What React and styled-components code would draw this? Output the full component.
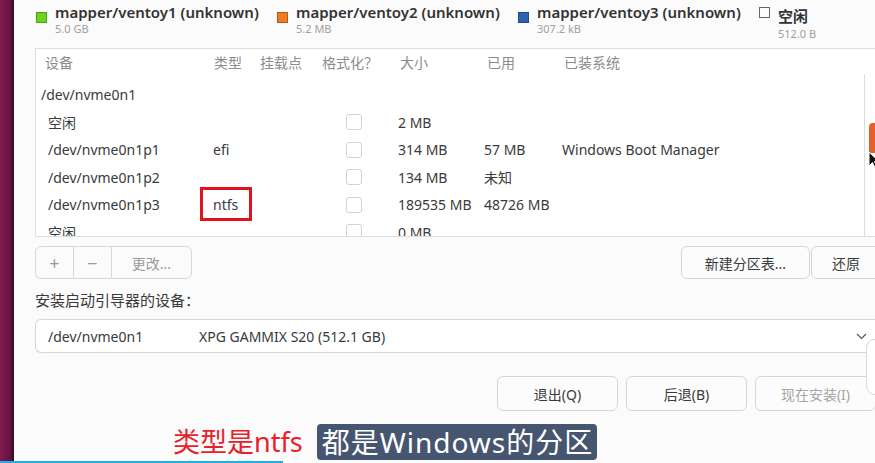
import React from 'react';
import styled, { createGlobalStyle } from 'styled-components';

const GlobalStyle = createGlobalStyle`
  html, body { margin: 0; padding: 0; background: #fbfbfb; }
  body {
    font-family: "Noto Sans", "Noto Sans CJK SC", sans-serif;
    color: #3c3c3c;
    overflow: hidden;
  }
`;

const Page = styled.div`
  position: relative;
  display: flex;
  width: 875px;
  height: 463px;
  overflow: hidden;
`;

const Desktop = styled.div`
  width: 12px;
  flex: none;
  background: linear-gradient(90deg, #7f1b50 0%, #6c1443 70%, #561036 100%);
  border-right: 2px solid #3a0f26;
`;

const Window = styled.div`
  flex: 1;
  min-width: 0;
  background: #fbfbfb;
  padding-left: 21px;
  display: flex;
  flex-direction: column;
`;

const Legend = styled.div`
  display: flex;
  height: 48px;
  margin-left: 1px;
`;

const LegendItem = styled.div`
  display: flex;
  align-items: flex-start;
  width: 241px;
  flex: none;
  padding-top: 1px;
`;

const Swatch = styled.span`
  width: 11px;
  height: 11px;
  margin-top: ${({ $empty }) => ($empty ? '6px' : '11px')};
  margin-right: 8px;
  flex: none;
  box-sizing: border-box;
  background: ${({ $color }) => $color || 'transparent'};
  border: 1px solid ${({ $color }) => ($color ? 'rgba(0,0,0,0.25)' : '#666')};
`;

const LegendText = styled.div`
  display: flex;
  flex-direction: column;
  padding-top: ${({ $empty }) => ($empty ? '4px' : '0')};
`;

const LegendName = styled.span`
  font-size: 15px;
  font-weight: 600;
  line-height: 22px;
  color: #333;
`;

const LegendSize = styled.span`
  font-size: 11px;
  line-height: 12px;
  color: #a0a0a0;
  margin-top: ${({ $empty }) => ($empty ? '1px' : '0')};
`;

const Table = styled.div`
  position: relative;
  height: 189px;
  margin-right: -12px;
  box-sizing: border-box;
  background: #fff;
  border: 1px solid #dedede;
  border-right: none;
  overflow: hidden;
`;

const cols = '177px 47px 62px 76px 86px 78px 1fr';

const HeadRow = styled.div`
  display: grid;
  grid-template-columns: ${cols};
  height: 25px;
  align-items: center;
  font-size: 14px;
  color: #8c8c8c;
  margin-bottom: 7px;
`;

const HeadCell = styled.div`
  padding-left: ${({ $pad }) => $pad ?? 2}px;
  white-space: nowrap;
`;

const Row = styled.div`
  display: grid;
  grid-template-columns: ${cols};
  height: 27.5px;
  align-items: center;
  font-size: 14px;
  color: #3a3a3a;
`;

const Cell = styled.div`
  position: relative;
  padding-left: ${({ $pad }) => $pad || 0}px;
  white-space: nowrap;
`;

const Marked = styled.span`
  position: relative;
  &::after {
    content: '';
    position: absolute;
    left: -13px;
    top: -8px;
    width: 52px;
    height: 34px;
    box-sizing: border-box;
    border: 3px solid #e0141c;
  }
`;

const Check = styled.span`
  display: block;
  width: 16px;
  height: 16px;
  margin-left: 24px;
  box-sizing: border-box;
  border: 1px solid #d2d2d2;
  border-radius: 3px;
  background: #fff;
`;

const Trough = styled.div`
  position: absolute;
  left: 828px;
  top: 25px;
  bottom: 0;
  width: 20px;
  border-left: 1px solid #dcdcdc;
  background: #fff;
`;

const Thumb = styled.div`
  position: absolute;
  left: 4px;
  top: 49px;
  width: 10px;
  height: 30px;
  background: #e4602a;
  border-radius: 4px 4px 0 0;
`;

const Pointer = styled.svg`
  position: absolute;
  left: 3px;
  top: 77px;
`;

const Toolbar = styled.div`
  display: flex;
  align-items: center;
  gap: 1px;
  margin-top: 9px;
  height: 33px;
  margin-right: -6px;
`;

const Group = styled.div`
  display: flex;
  height: 33px;
  box-sizing: border-box;
  border: 1px solid #d8d8d8;
  border-radius: 6px;
  background: #fbfbfb;
  overflow: hidden;
`;

const GroupButton = styled.div`
  width: ${({ $w }) => $w}px;
  display: flex;
  align-items: center;
  justify-content: center;
  font-size: ${({ $big }) => ($big ? 18 : 14)}px;
  color: #9a9a9a;
  & + & { border-left: 1px solid #d8d8d8; }
`;

const Spacer = styled.div`
  flex: 1;
`;

const Button = styled.div`
  width: ${({ $w }) => $w}px;
  height: ${({ $h }) => $h || 33}px;
  flex: none;
  box-sizing: border-box;
  display: flex;
  align-items: center;
  justify-content: center;
  border: 1px solid #d6d6d6;
  border-radius: 6px;
  background: #fcfcfc;
  font-size: 14px;
  color: ${({ $disabled }) => ($disabled ? '#a5a5a5' : '#3a3a3a')};
  white-space: nowrap;
`;

const Label = styled.div`
  margin-top: 9px;
  height: 24px;
  line-height: 24px;
  font-size: 15px;
  color: #3a3a3a;
`;

const Select = styled.div`
  margin-top: 7px;
  height: 34px;
  margin-right: -12px;
  box-sizing: border-box;
  display: flex;
  align-items: center;
  border: 1px solid #d8d8d8;
  border-right: none;
  border-radius: 6px 0 0 6px;
  background: #fff;
  font-size: 14px;
  color: #3a3a3a;
  padding-left: 12px;
`;

const SelectDev = styled.span`
  width: 151px;
  flex: none;
`;

const Chevron = styled.svg`
  margin-left: auto;
  margin-right: 20px;
`;

const Actions = styled.div`
  display: flex;
  justify-content: flex-end;
  gap: 8px;
  margin-top: 23px;
  margin-right: -1px;
`;

const Popup = styled.div`
  position: absolute;
  left: 866px;
  top: 339px;
  width: 30px;
  height: 54px;
  background: #fff;
  border: 1px solid #dadada;
  border-radius: 9px;
`;

const Subtitles = styled.div`
  position: absolute;
  left: 173px;
  top: 424px;
  display: flex;
  align-items: center;
  gap: 14px;
  font-family: "Noto Sans", "Noto Sans CJK SC", sans-serif;
`;

const Caption = styled.span`
  font-size: ${({ $boxed }) => ($boxed ? 28 : 27)}px;
  line-height: 36px;
  letter-spacing: ${({ $boxed }) => ($boxed ? '1px' : '0')};
  color: ${({ $boxed }) => ($boxed ? '#fff' : '#e8202b')};
  background: ${({ $boxed }) => ($boxed ? '#465670' : 'none')};
  border-radius: 4px;
  padding: ${({ $boxed }) => ($boxed ? '0 4px 0 5px' : '0')};
  white-space: nowrap;
`;

const Progress = styled.div`
  position: absolute;
  left: 0;
  bottom: 0;
  width: 283px;
  height: 2px;
  background: #19b1e6;
`;

const legend = [
  { name: 'mapper/ventoy1 (unknown)', size: '5.0 GB', color: '#6ad41e' },
  { name: 'mapper/ventoy2 (unknown)', size: '5.2 MB', color: '#ee7a22' },
  { name: 'mapper/ventoy3 (unknown)', size: '307.2 kB', color: '#2f63ad' },
  { name: '空闲', size: '512.0 B' },
];

const partitions = [
  { dev: '空闲', size: '2 MB' },
  { dev: '/dev/nvme0n1p1', type: 'efi', size: '314 MB', used: '57 MB', system: 'Windows Boot Manager' },
  { dev: '/dev/nvme0n1p2', size: '134 MB', used: '未知' },
  { dev: '/dev/nvme0n1p3', type: 'ntfs', marked: true, size: '189535 MB', used: '48726 MB' },
  { dev: '空闲', size: '0 MB' },
];

export default function App() {
  return (
    <>
      <GlobalStyle />
      <Page>
        <Desktop />
        <Window>
          <Legend>
            {legend.map((item) => (
              <LegendItem key={item.name}>
                <Swatch $color={item.color} $empty={!item.color} />
                <LegendText $empty={!item.color}>
                  <LegendName>{item.name}</LegendName>
                  <LegendSize $empty={!item.color}>{item.size}</LegendSize>
                </LegendText>
              </LegendItem>
            ))}
          </Legend>

          <Table>
            <HeadRow>
              <HeadCell $pad={9}>设备</HeadCell>
              <HeadCell $pad={1}>类型</HeadCell>
              <HeadCell $pad={0}>挂载点</HeadCell>
              <HeadCell $pad={0}>格式化？</HeadCell>
              <HeadCell>大小</HeadCell>
              <HeadCell $pad={3}>已用</HeadCell>
              <HeadCell>已装系统</HeadCell>
            </HeadRow>
            <Row>
              <Cell $pad={5}>/dev/nvme0n1</Cell>
            </Row>
            {partitions.map((p, i) => (
              <Row key={i}>
                <Cell $pad={12}>{p.dev}</Cell>
                <Cell>{p.marked ? <Marked>{p.type}</Marked> : p.type}</Cell>
                <Cell />
                <Cell><Check /></Cell>
                <Cell>{p.size}</Cell>
                <Cell>{p.used}</Cell>
                <Cell>{p.system}</Cell>
              </Row>
            ))}
            <Trough>
              <Thumb />
              <Pointer width="12" height="18" viewBox="0 0 12 18">
                <path d="M1 1 L1 15 L4.5 11.5 L7 17 L9 16 L6.5 10.5 L11 10.5 Z" fill="#111" stroke="#fff" strokeWidth="1" />
              </Pointer>
            </Trough>
          </Table>

          <Toolbar>
            <Group>
              <GroupButton $w={37} $big>+</GroupButton>
              <GroupButton $w={37} $big>−</GroupButton>
              <GroupButton $w={79}>更改...</GroupButton>
            </Group>
            <Spacer />
            <Button $w={129}>新建分区表...</Button>
            <Button $w={70}>还原</Button>
          </Toolbar>

          <Label>安装启动引导器的设备：</Label>

          <Select>
            <SelectDev>/dev/nvme0n1</SelectDev>
            <span>XPG GAMMIX S20 (512.1 GB)</span>
            <Chevron width="11" height="7" viewBox="0 0 11 7">
              <path d="M1 1 L5.5 5.5 L10 1" fill="none" stroke="#555" strokeWidth="1.2" />
            </Chevron>
          </Select>

          <Actions>
            <Button $w={121} $h={35}>退出(Q)</Button>
            <Button $w={121} $h={35}>后退(B)</Button>
            <Button $w={121} $h={35} $disabled>现在安装(I)</Button>
          </Actions>
        </Window>

        <Popup />
        <Subtitles>
          <Caption>类型是ntfs</Caption>
          <Caption $boxed>都是Windows的分区</Caption>
        </Subtitles>
        <Progress />
      </Page>
    </>
  );
}
